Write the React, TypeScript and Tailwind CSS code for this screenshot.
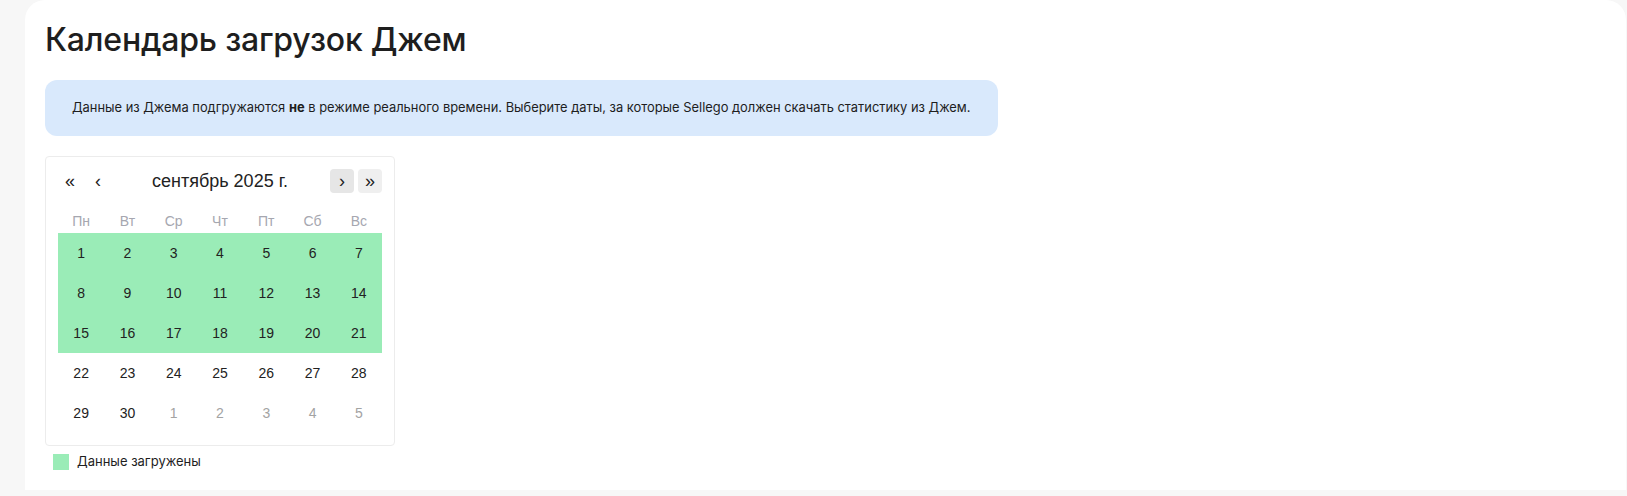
import React from 'react';

// Календарь загрузок: сентябрь 2025, дни с загруженными данными подсвечены
const weekDays = ['Пн', 'Вт', 'Ср', 'Чт', 'Пт', 'Сб', 'Вс'];

type Day = { n: number; outside?: boolean; loaded?: boolean };

const weeks: Day[][] = [
  [1, 2, 3, 4, 5, 6, 7].map((n) => ({ n, loaded: true })),
  [8, 9, 10, 11, 12, 13, 14].map((n) => ({ n, loaded: true })),
  [15, 16, 17, 18, 19, 20, 21].map((n) => ({ n, loaded: true })),
  [22, 23, 24, 25, 26, 27, 28].map((n) => ({ n })),
  [
    { n: 29 },
    { n: 30 },
    { n: 1, outside: true },
    { n: 2, outside: true },
    { n: 3, outside: true },
    { n: 4, outside: true },
    { n: 5, outside: true },
  ],
];

function NavButton({ label, className }: { label: string; className?: string }) {
  return (
    <button
      className={`w-6 h-6 flex items-center justify-center rounded text-[18px] leading-none text-[#222] ${className ?? ''}`}
    >
      {label}
    </button>
  );
}

function Calendar() {
  return (
    <div className="w-[350px] border border-[#ececec] rounded-[4px] px-3 pt-[12px] pb-3 font-['Liberation_Sans',Arial,sans-serif]">
      <div className="flex items-center gap-1 h-6">
        <NavButton label="«" />
        <NavButton label="‹" />
        <div className="flex-1 text-center text-[18px] text-[#222]">сентябрь 2025 г.</div>
        <NavButton label="›" className="bg-[#e6e6e6]" />
        <NavButton label="»" className="bg-[#efefef]" />
      </div>
      <div className="grid grid-cols-7 mt-4 h-6 items-center">
        {weekDays.map((d) => (
          <div key={d} className="text-center text-[14px] text-[#a6a7b0]">
            {d}
          </div>
        ))}
      </div>
      <div className="flex flex-col">
        {weeks.map((week, i) => (
          <div key={i} className="grid grid-cols-7">
            {week.map((day, j) => (
              <div
                key={j}
                className={`h-10 flex items-center justify-center text-[14px] ${
                  day.loaded ? 'bg-[#9aecb7]' : ''
                } ${day.outside ? 'text-[#a3a3a3]' : 'text-[#222]'}`}
              >
                {day.n}
              </div>
            ))}
          </div>
        ))}
      </div>
    </div>
  );
}

export default function App() {
  return (
    <div className="bg-[#f7f7f7] pl-[25px] pr-px pb-[6px] font-['Inter',sans-serif]">
      <div className="bg-white rounded-t-[20px] pt-5 pb-5 px-5">
        <h1 className="text-[32px] leading-10 font-medium text-[#1e1e1e] tracking-[-0.2px]">
          Календарь загрузок Джем
        </h1>
        <div className="mt-5 w-[953px] h-14 flex items-center rounded-xl bg-[#d9e9fc] pl-[27px] text-[12.9px] text-[#1e1e1e]">
          <p>
            Данные из Джема подгружаются <b className="font-bold">не</b> в режиме реального времени. Выберите
            даты, за которые Sellego должен скачать статистику из Джем.
          </p>
        </div>
        <div className="mt-5">
          <Calendar />
        </div>
        <div className="mt-2 ml-2 flex items-center gap-2 h-4">
          <span className="w-4 h-4 bg-[#9aecb7]" />
          <span className="text-[13px] text-[#1e1e1e]">Данные загружены</span>
        </div>
      </div>
    </div>
  );
}
